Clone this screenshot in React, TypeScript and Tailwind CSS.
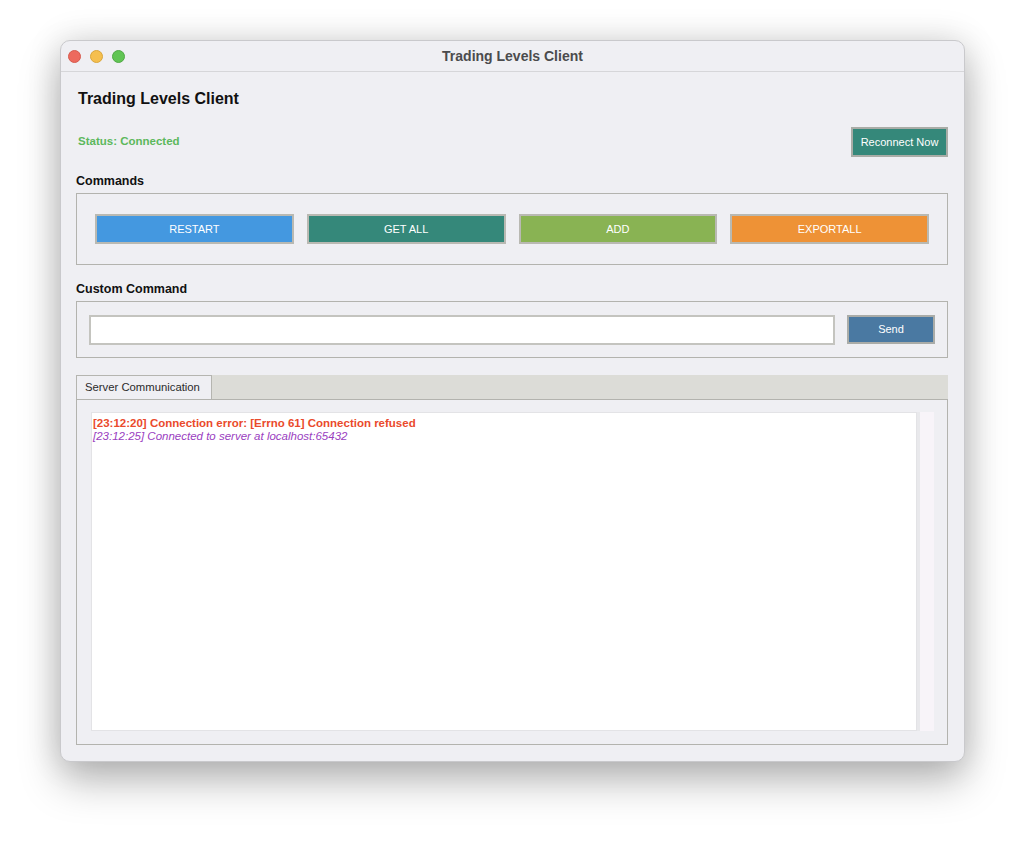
import React from 'react'

const commands = [
  { id: 'restart', label: 'RESTART', color: 'bg-[#4498e0]' },
  { id: 'getall', label: 'GET ALL', color: 'bg-[#35887a]' },
  { id: 'add', label: 'ADD', color: 'bg-[#89b353]' },
  { id: 'exportall', label: 'EXPORTALL', color: 'bg-[#ee9236]' },
]

const font = { fontFamily: '"Liberation Sans", Arial, Helvetica, sans-serif' }

function TrafficLights() {
  return (
    <div className="flex items-center gap-[9px] pl-[7px]">
      <span className="w-[13px] h-[13px] rounded-full bg-[#ed6a5e] border border-[#d65a4e]" />
      <span className="w-[13px] h-[13px] rounded-full bg-[#f5bf4f] border border-[#d9a63c]" />
      <span className="w-[13px] h-[13px] rounded-full bg-[#61c554] border border-[#51a846]" />
    </div>
  )
}

export default function App() {
  return (
    <div className="w-[1024px] h-[841px] bg-white pl-[60px] pt-[40px]" style={font}>
      <div className="w-[905px] h-[722px] rounded-[10px] bg-[#efeff3] border border-[#c9c9cc] shadow-[0_20px_40px_rgba(0,0,0,0.26),0_0_34px_rgba(0,0,0,0.14)] flex flex-col overflow-hidden">
        {/* Title bar */}
        <div className="relative h-[31px] shrink-0 flex items-center border-b border-[#d6d6d9]">
          <TrafficLights />
          <div className="absolute inset-0 flex items-center justify-center text-[14px] font-bold text-[#4b4b4d]">
            Trading Levels Client
          </div>
        </div>

        <div className="flex-1 flex flex-col pl-[15px] pr-[16px] pb-[16px]">
          <h1 className="mt-[17px] pl-[2px] text-[16px] leading-[20px] font-bold text-[#111]">Trading Levels Client</h1>

          <div className="mt-[18px] flex items-center justify-between">
            <span className="pl-[2px] text-[11.5px] font-bold text-[#5cb85c]">Status: Connected</span>
            <button className="w-[97px] h-[30px] bg-[#35887a] border-2 border-[#a9aca6] text-white text-[11px]">
              Reconnect Now
            </button>
          </div>

          {/* Commands */}
          <div className="mt-[16px] text-[12.5px] leading-[16px] font-bold text-[#111]">Commands</div>
          <div className="mt-[4px] h-[72px] border border-[#b3b3ae] px-[18px] flex items-center">
            <div className="w-full grid grid-cols-4 gap-[13px]">
              {commands.map((c) => (
                <button
                  key={c.id}
                  className={`${c.color} h-[30px] border-2 border-[#b9b9b2] text-white text-[11px]`}
                >
                  {c.label}
                </button>
              ))}
            </div>
          </div>

          {/* Custom command */}
          <div className="mt-[16px] text-[12.5px] leading-[16px] font-bold text-[#111]">Custom Command</div>
          <div className="mt-[4px] h-[57px] border border-[#b3b3ae] px-[12px] flex items-center gap-[12px]">
            <input className="flex-1 h-[30px] bg-white border-2 border-[#c4c4bf] outline-none" />
            <button className="w-[88px] h-[29px] bg-[#4a79a2] border-2 border-[#aaaca8] text-white text-[11px]">
              Send
            </button>
          </div>

          {/* Tabs */}
          <div className="mt-[17px] flex-1 flex flex-col">
            <div className="h-[24px] bg-[#dcdcd7] flex">
              <div className="w-[136px] h-[24px] bg-[#efeff3] border border-b-0 border-[#b5b5b0] flex items-center pl-[8px] text-[11.3px] text-[#2b2b2b]">
                Server Communication
              </div>
            </div>
            <div className="flex-1 border border-[#b3b3ae] pt-[12px] pb-[13px] pl-[14px] pr-[13px] flex">
              <div className="flex-1 bg-white border border-[#e3e3e6] px-[1px] pt-[4px] text-[11.5px] leading-[13px]">
                <div className="font-bold text-[#ea4a2c]">[23:12:20] Connection error: [Errno 61] Connection refused</div>
                <div className="italic text-[#9a40bf]">[23:12:25] Connected to server at localhost:65432</div>
              </div>
              <div className="w-[3px] bg-[#e9e9ec]" />
              <div className="w-[14px] bg-[#f8f4f9]" />
            </div>
          </div>
        </div>
      </div>
    </div>
  )
}
